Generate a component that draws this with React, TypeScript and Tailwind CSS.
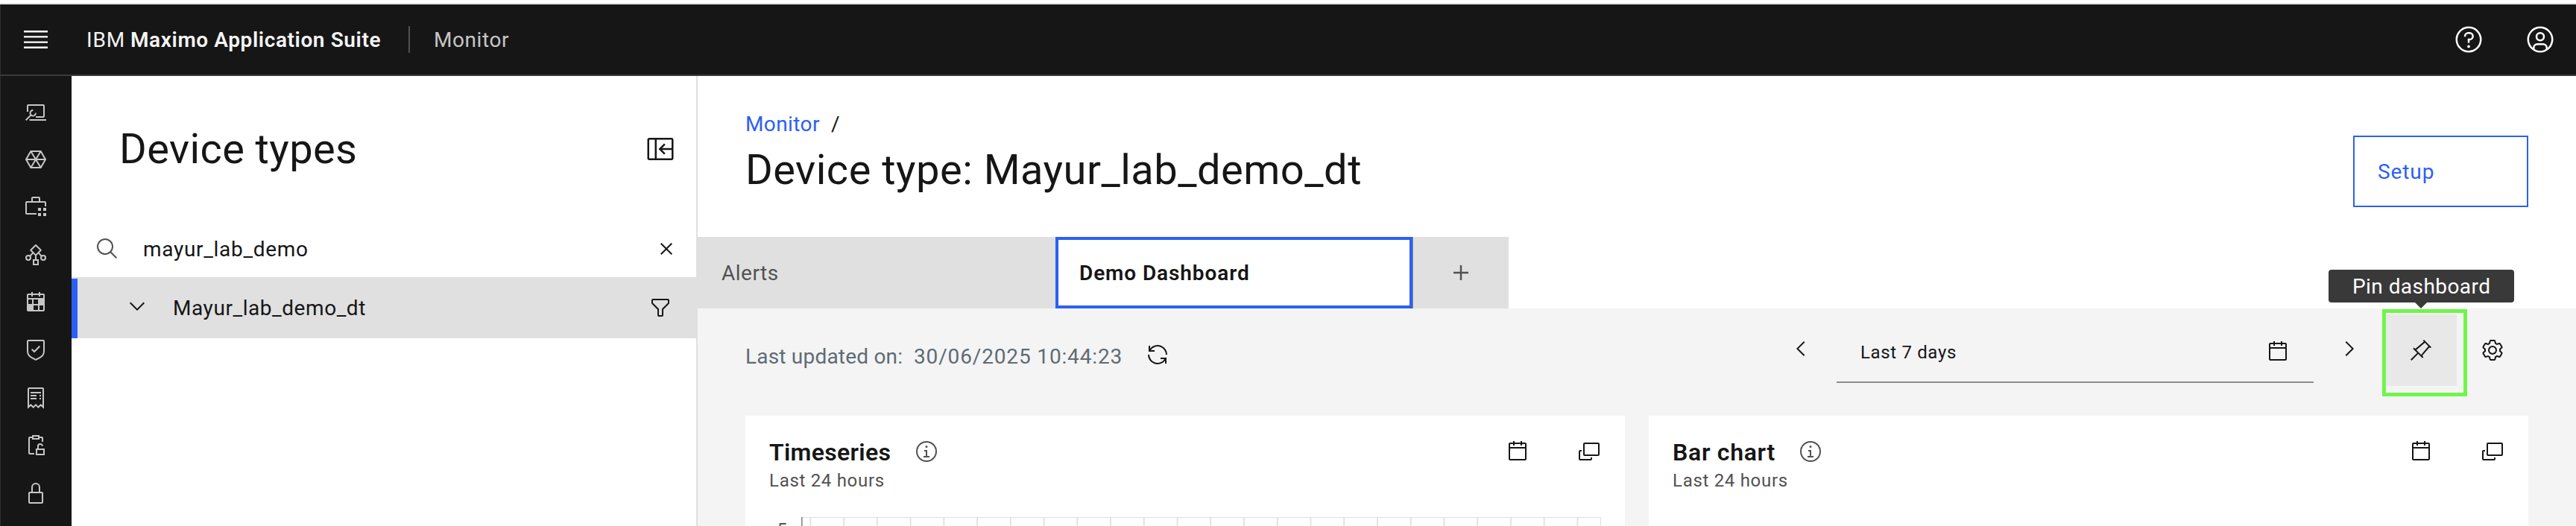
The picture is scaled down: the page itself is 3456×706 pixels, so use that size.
import React from "react";

type IconProps = { size?: number; className?: string; children: React.ReactNode };

function Glyph({ size = 32, className = "", children }: IconProps) {
  return (
    <svg width={size} height={size} viewBox="0 0 32 32" fill="currentColor" className={`block shrink-0 ${className}`} aria-hidden="true">
      {children}
    </svg>
  );
}

const calendarPath =
  "M26,4h-4V2h-2v2h-8V2h-2v2H6C4.9,4,4,4.9,4,6v20c0,1.1,0.9,2,2,2h20c1.1,0,2-0.9,2-2V6C28,4.9,27.1,4,26,4z M26,26H6V12h20V26z M26,10H6V6h4v2h2V6h8v2h2V6h4V10z";

const Calendar = () => <Glyph><path d={calendarPath} /></Glyph>;

const Popup = () => (
  <Glyph>
    <path d="M28,4H10A2.0059,2.0059,0,0,0,8,6V20a2.0059,2.0059,0,0,0,2,2H28a2.0059,2.0059,0,0,0,2-2V6A2.0059,2.0059,0,0,0,28,4Zm0,16H10V6H28Z" />
    <path d="M18,26H4V16H6V14H4a2.0059,2.0059,0,0,0-2,2V26a2.0059,2.0059,0,0,0,2,2H18a2.0059,2.0059,0,0,0,2-2V24H18Z" />
  </Glyph>
);

const Information = ({ className }: { className?: string }) => (
  <Glyph className={className}>
    <path d="M17 22 17 14 13 14 13 16 15 16 15 22 12 22 12 24 20 24 20 22Z" />
    <path d="M16,8a1.5,1.5,0,1,0,1.5,1.5A1.5,1.5,0,0,0,16,8Z" />
    <path d="M16,30A14,14,0,1,1,30,16,14,14,0,0,1,16,30ZM16,4A12,12,0,1,0,28,16,12,12,0,0,0,16,4Z" />
  </Glyph>
);

const railIcons: React.ReactNode[] = [
  <g key="manage" fill="none" stroke="currentColor" strokeWidth="2">
    <path d="M5 16V8a1 1 0 0 1 1-1H26a1 1 0 0 1 1 1V22a1 1 0 0 1-1 1H16" />
    <path d="M7.5 27H30M2.7 27.3 9.6 20.4" />
    <path d="M12.4 14.1A3.7 3.7 0 1 0 15.9 17.6" />
  </g>,
  <path key="hex" fill="none" stroke="currentColor" strokeWidth="2" strokeLinejoin="round" d="M9.3 5H22.7L29 16 22.7 27H9.3L3 16ZM9.3 5 22.7 27M22.7 5 9.3 27M3 16H29" />,
  <g key="case">
    <path d="M30 15V10a2 2 0 0 0-2-2H22V4a2 2 0 0 0-2-2H12a2 2 0 0 0-2 2V8H4a2 2 0 0 0-2 2V24a2 2 0 0 0 2 2H17V24H4V10H28v5ZM12 4h8V8H12Z" />
    <path d="M19 17h4v4h-4zM26 17h4v4h-4zM19 24h4v4h-4zM26 24h4v4h-4z" />
  </g>,
  <g key="flow" fill="none" stroke="currentColor" strokeWidth="2">
    <path strokeLinejoin="round" d="M16 3 22.8 9.8 16 16.6 9.2 9.8Z" />
    <circle cx="6" cy="20" r="3" />
    <circle cx="26" cy="20" r="3" />
    <path d="M13 23h6v6h-6zM16 16.6V23M8.2 17.9 12.2 13.4M23.8 17.9 19.8 13.4" />
  </g>,
  <path key="heat" fillRule="evenodd" d="M26,4h-4V2h-2v2h-8V2h-2v2H6C4.9,4,4,4.9,4,6v20c0,1.1,0.9,2,2,2h20c1.1,0,2-0.9,2-2V6C28,4.9,27.1,4,26,4zM6 6h4v2h2V6h8v2h2V6h4v4H6ZM6 12h5v6H6ZM13 12h6v6h-6ZM13 20h6v6h-6ZM21 20h5v6h-5Z" />,
  <g key="shield">
    <path d="M14 16.59L11.41 14 10 15.41 14 19.41 22 11.41 20.59 10 14 16.59z" />
    <path d="M16,30,9.8242,26.7071A10.9818,10.9818,0,0,1,4,17V4A2.0021,2.0021,0,0,1,6,2H26a2.0021,2.0021,0,0,1,2,2V17a10.9818,10.9818,0,0,1-5.8242,9.7069ZM6,4V17a8.9852,8.9852,0,0,0,4.7656,7.9423L16,27.7333l5.2344-2.791A8.9852,8.9852,0,0,0,26,17V4Z" />
  </g>,
  <g key="receipt">
    <path d="M9 8h14v2H9zM9 12h8v2H9zM21 12h2v2h-2zM9 16h8v2H9zM21 16h2v2h-2z" />
    <path fill="none" stroke="currentColor" strokeWidth="2" d="M6 28.5V4a1 1 0 0 1 1-1H25a1 1 0 0 1 1 1V28.5L22.7 25.4 19.3 28.6 16 25.4 12.7 28.6 9.3 25.4Z" />
  </g>,
  <g key="clip" fill="none" stroke="currentColor" strokeWidth="2">
    <path d="M14 27H8a1 1 0 0 1-1-1V6a1 1 0 0 1 1-1H11M21 5H24a1 1 0 0 1 1 1V11" />
    <path d="M12 3h8v4h-8zM17 21h10v7H17zM19 21V17a3 3 0 0 1 6-.2" />
  </g>,
  <path key="lock" d="M24,14H22V8A6,6,0,0,0,10,8v6H8a2,2,0,0,0-2,2V28a2,2,0,0,0,2,2H24a2,2,0,0,0,2-2V16A2,2,0,0,0,24,14ZM12,8a4,4,0,0,1,8,0v6H12ZM24,28H8V16H24Z" />,
];

function T({ className = "", children }: { className?: string; children: React.ReactNode }) {
  return <span className={`whitespace-pre ${className}`}>{children}</span>;
}

function Header() {
  return (
    <header className="flex h-[96px] shrink-0 items-center border-b-2 border-[#393939] bg-[#161616] px-[28px] text-white shadow-[inset_1px_0_0_#2e2e2e]">
      <svg width="40" height="40" viewBox="0 0 20 20" fill="currentColor" className="block shrink-0">
        <path d="M2 14.8h16V16H2zM2 11.2h16v1.2H2zM2 7.6h16v1.2H2zM2 4h16v1.2H2z" />
      </svg>
      <div className="ml-[48px] flex w-[432px] items-center pt-px text-[28px] leading-[40px] text-[#f4f4f4]">
        <T className="w-[59px] tracking-[0.8px]">IBM</T>
        <T className="font-semibold tracking-[0.6px]">Maximo Application Suite</T>
      </div>
      <div className="h-[36px] w-[2px] bg-[#525252]" />
      <T className="ml-[32px] pt-px text-[28px] leading-[40px] tracking-[0.58px] text-[#c6c6c6]">Monitor</T>
      <div className="ml-auto flex gap-[56px]">
        <Glyph size={40}>
          <path d="M16,2A14,14,0,1,0,30,16,14,14,0,0,0,16,2Zm0,26A12,12,0,1,1,28,16,12,12,0,0,1,16,28Z" />
          <circle cx="16" cy="23.5" r="1.5" />
          <path d="M17,8H15.5A4.49,4.49,0,0,0,11,12.5V13h2v-.5A2.5,2.5,0,0,1,15.5,10H17a2.5,2.5,0,0,1,0,5H15v4.5h2V17a4.5,4.5,0,0,0,0-9Z" />
        </Glyph>
        <Glyph size={40}>
          <path d="M16,8a5,5,0,1,0,5,5A5,5,0,0,0,16,8Zm0,8a3,3,0,1,1,3-3A3.0034,3.0034,0,0,1,16,16Z" />
          <path d="M16,2A14,14,0,1,0,30,16,14.0158,14.0158,0,0,0,16,2ZM10,26.3765V25a3.0033,3.0033,0,0,1,3-3h6a3.0033,3.0033,0,0,1,3,3v1.3765a11.8989,11.8989,0,0,1-12,0Zm13.9925-1.4507A5.0016,5.0016,0,0,0,19,20H13a5.0016,5.0016,0,0,0-4.9925,4.9258,12,12,0,1,1,15.985,0Z" />
        </Glyph>
      </div>
    </header>
  );
}

function DeviceTypesPanel() {
  return (
    <section className="flex w-[840px] shrink-0 flex-col border-r-2 border-[#e0e0e0] bg-white">
      <div className="flex h-[196px] items-center justify-between pl-[64px] pr-[28px]">
        <h2 className="flex text-[56px] leading-[72px] tracking-[0.4px]"><T>Device types</T></h2>
        <Glyph size={40} className="mb-px">
          <path d="M28,4H4C2.9,4,2,4.9,2,6v20c0,1.1,0.9,2,2,2h24c1.1,0,2-0.9,2-2V6C30,4.9,29.1,4,28,4z M10,26H4V6h6V26z M28,15H17.8l3.6-3.6L20,10l-6,6l6,6l1.4-1.4L17.8,17H28v9H12V6h16V15z" />
        </Glyph>
      </div>
      <div className="flex h-[74px] items-center pb-[2px] pl-[32px] pr-[24px]">
        <Glyph className="text-[#525252]">
          <path d="M29,27.5859l-7.5521-7.5521a11.0177,11.0177,0,1,0-1.4141,1.4141L27.5859,29ZM4,13a9,9,0,1,1,9,9A9.01,9.01,0,0,1,4,13Z" />
        </Glyph>
        <T className="ml-[32px] pt-[2px] text-[28px] leading-[40px] tracking-[0.7px]">mayur_lab_demo</T>
        <Glyph className="ml-auto">
          <path d="M24 9.4 22.6 8 16 14.6 9.4 8 8 9.4 14.6 16 8 22.6 9.4 24 16 17.4 22.6 24 24 22.6 17.4 16Z" />
        </Glyph>
      </div>
      <div className="-mr-[2px] flex h-[82px] items-center border-t-2 border-[#e0e0e0] bg-[#e0e0e0]">
        <div className="h-full w-[8px] bg-[#2b60f6]" />
        <Glyph className="mb-[6px] ml-[64px]">
          <path d="M16 22 6 12 7.4 10.6 16 19.2 24.6 10.6 26 12Z" />
        </Glyph>
        <T className="ml-[32px] text-[28px] leading-[38px] tracking-[0.56px]">Mayur_lab_demo_dt</T>
        <Glyph className="mb-[2px] ml-auto mr-[34px]">
          <path d="M18,28H14a2,2,0,0,1-2-2V18.41L4.59,11A2,2,0,0,1,4,9.59V6A2,2,0,0,1,6,4H26a2,2,0,0,1,2,2V9.59A2,2,0,0,1,27.41,11L20,18.41V26A2,2,0,0,1,18,28ZM6,6V9.59l8,8V26h4V17.59l8-8V6Z" />
        </Glyph>
      </div>
    </section>
  );
}

function Toolbar() {
  return (
    <div className="flex h-[144px] shrink-0 items-start">
      <div className="mt-[44px] flex h-[40px] items-center text-[28px] leading-[40px] text-[#5f6b73]">
        <T className="w-[226px] pt-[2px] tracking-[0.2px]">Last updated on:</T>
        <T className="w-[311px] pt-[2px] tracking-[0.85px]">30/06/2025 10:44:23</T>
        <Glyph className="mb-[4px] text-[#161616]">
          <path d="M12,10H6.78A11,11,0,0,1,27,16h2A13,13,0,0,0,6,7.68V4H4v8h8Z" />
          <path d="M20,22h5.22A11,11,0,0,1,5,16H3a13,13,0,0,0,23,8.32V28h2V20H20Z" />
        </Glyph>
      </div>
      <div className="ml-auto mt-[4px] flex items-start">
        <button className="flex h-[96px] w-[96px] items-center justify-center pt-[4px]">
          <Glyph><path d="M10 16 20 6 21.4 7.4 12.8 16 21.4 24.6 20 26Z" /></Glyph>
        </button>
        <div className="flex h-[96px] w-[640px] items-center justify-between border-b-2 border-[#8d8d8d] pl-[32px] pr-[32px] pt-[14px]">
          <T className="pt-[2px] text-[24px] leading-[34px] tracking-[0.65px]">Last 7 days</T>
          <Calendar />
        </div>
        <button className="flex h-[96px] w-[96px] items-center justify-center pt-[4px]">
          <Glyph><path d="M22 16 12 26 10.6 24.6 19.2 16 10.6 7.4 12 6Z" /></Glyph>
        </button>
        <button className="relative mt-[4px] flex h-[96px] w-[96px] items-center justify-center bg-[#e8e8e8]">
          <Glyph>
            <path d="M28.5858,13.3137,30,11.9,20,2,18.6858,3.415l1.1857,1.1857L8.38,14.3225,6.6641,12.6067,5.25,14l5.6572,5.6773L2,28.5831,3.41,30l8.9111-8.9087L18,26.7482l1.3929-1.414L17.6765,23.618l9.724-11.4895ZM16.2559,22.1973,9.7966,15.738l11.4912-9.7219,4.6895,4.6893Z" />
          </Glyph>
          <span className="absolute left-[-4px] top-[-7px] h-[117px] w-[114px] border-[5px] border-[#70f54a]" />
          <span className="absolute left-[-76px] top-[-60px] flex h-[44px] w-[249px] items-center rounded-[4px] bg-[#393939] pl-[32px] pt-px text-[28px] leading-[40px] tracking-[0.44px] text-white">
            <T>Pin dashboard</T>
          </span>
          <svg className="absolute left-[40px] top-[-16px]" width="16" height="8" viewBox="0 0 16 8"><path d="M0 0H16L8 8Z" fill="#393939" /></svg>
        </button>
        <button className="mt-[4px] flex h-[96px] w-[96px] items-center justify-center">
          <Glyph>
            <path d="M27,16.76c0-.25,0-.5,0-.76s0-.51,0-.77l1.92-1.68A2,2,0,0,0,29.3,11L26.94,7a2,2,0,0,0-1.73-1,2,2,0,0,0-.64.1l-2.43.82a11.35,11.35,0,0,0-1.31-.75l-.51-2.52a2,2,0,0,0-2-1.61H13.64a2,2,0,0,0-2,1.61l-.51,2.52a11.48,11.48,0,0,0-1.32.75L7.43,6.06A2,2,0,0,0,6.79,6,2,2,0,0,0,5.06,7L2.7,11a2,2,0,0,0,.41,2.51L5,15.24c0,.25,0,.5,0,.76s0,.51,0,.77L3.11,18.45A2,2,0,0,0,2.7,21L5.06,25a2,2,0,0,0,1.73,1,2,2,0,0,0,.64-.1l2.43-.82a11.35,11.35,0,0,0,1.31.75l.51,2.52a2,2,0,0,0,2,1.61h4.72a2,2,0,0,0,2-1.61l.51-2.52a11.48,11.48,0,0,0,1.32-.75l2.42.82a2,2,0,0,0,.64.1,2,2,0,0,0,1.73-1L29.3,21a2,2,0,0,0-.41-2.51ZM25.21,24l-3.43-1.16a8.86,8.86,0,0,1-2.71,1.57L18.36,28H13.64l-.71-3.55a9.36,9.36,0,0,1-2.7-1.57L6.79,24,4.43,20l2.72-2.4a8.9,8.9,0,0,1,0-3.13L4.43,12,6.79,8l3.43,1.16a8.86,8.86,0,0,1,2.71-1.57L13.64,4h4.72l.71,3.55a9.36,9.36,0,0,1,2.7,1.57L25.21,8,27.57,12l-2.72,2.4a8.9,8.9,0,0,1,0,3.13L27.57,20Z" />
            <path d="M16,22a6,6,0,1,1,6-6A5.94,5.94,0,0,1,16,22Zm0-10a3.91,3.91,0,0,0-4,4,3.91,3.91,0,0,0,4,4,3.91,3.91,0,0,0,4-4A3.91,3.91,0,0,0,16,12Z" />
          </Glyph>
        </button>
      </div>
    </div>
  );
}

function Card({ title, titleClass, children }: { title: string; titleClass: string; children?: React.ReactNode }) {
  return (
    <article className="flex w-[1180px] shrink-0 flex-col bg-white">
      <div className="flex h-[96px] items-center pl-[32px]">
        <h3 className="flex pt-[2px] text-[32px] leading-[48px] font-semibold"><T className={titleClass}>{title}</T></h3>
        <Information className="text-[#525252]" />
        <div className="ml-auto flex">
          <button className="flex h-[96px] w-[96px] items-center justify-center"><Calendar /></button>
          <button className="flex h-[96px] w-[96px] items-center justify-center"><Popup /></button>
        </div>
      </div>
      <p className="mt-[-25px] flex pl-[32px] text-[24px] leading-[32px] tracking-[0.7px] text-[#525252]"><T>Last 24 hours</T></p>
      {children}
    </article>
  );
}

const gridLines = Array.from({ length: 24 }, (_, i) => 87.4 + i * 44.74);

export default function App() {
  return (
    <div className="flex h-[706px] w-full flex-col overflow-hidden bg-white font-['Roboto',sans-serif] text-[#161616]">
      <div className="h-[6px] shrink-0 border-b-2 border-[#e0e4e2] bg-white" />
      <Header />
      <div className="flex min-h-0 flex-1">
        <nav className="flex w-[96px] shrink-0 flex-col items-center gap-[32px] bg-[#161616] pt-[32px] text-[#c6c6c6] shadow-[inset_1px_0_0_#2e2e2e]">
          {railIcons.map((icon, i) => <Glyph key={i}>{icon}</Glyph>)}
        </nav>
        <DeviceTypesPanel />
        <main className="flex min-w-0 flex-1 flex-col">
          <div className="flex h-[216px] shrink-0 items-start justify-between px-[64px]">
            <div className="pt-[45px]">
              <div className="flex text-[28px] leading-[40px]">
                <T className="w-[115px] tracking-[0.4px] text-[#2b60f6]">Monitor</T>
                <T>/</T>
              </div>
              <h1 className="mt-[5px] flex text-[56px] leading-[72px] tracking-[0.5px]"><T>Device type: Mayur_lab_demo_dt</T></h1>
            </div>
            <button className="mt-[80px] flex h-[96px] w-[235px] items-center border-2 border-[#2b60f6] pl-[31px] pt-px text-[28px] leading-[40px] tracking-[0.9px] text-[#2b60f6]">
              <T>Setup</T>
            </button>
          </div>
          <div className="flex h-[96px] shrink-0 text-[28px] leading-[40px]">
            <div className="flex w-[480px] items-center bg-[#e0e0e0] pl-[32px] pt-[2px] tracking-[0.5px] text-[#525252]"><T>Alerts</T></div>
            <div className="flex w-[479px] items-center border-4 border-[#2b60f6] bg-white pl-[28px] pt-[2px] font-semibold tracking-[0.9px]"><T>Demo Dashboard</T></div>
            <div className="flex w-[129px] items-center justify-center border-l border-[#8d8d8d] bg-[#e0e0e0] text-[#525252]">
              <Glyph size={40}><path d="M17 15 17 8 15 8 15 15 8 15 8 17 15 17 15 24 17 24 17 17 24 17 24 15Z" /></Glyph>
            </div>
          </div>
          <div className="flex flex-1 flex-col bg-[#f4f4f4] px-[64px]">
            <Toolbar />
            <div className="flex flex-1 gap-[32px]">
              <Card title="Timeseries" titleClass="w-[195px] tracking-[0.3px]">
                <svg width="1180" height="16" viewBox="0 0 1180 16" className="mt-[29px] block shrink-0" fill="none">
                  <path d="M76 4.5H1148" stroke="#e0e0e0" />
                  {gridLines.map((x) => <path key={x} d={`M${x} 4V16`} stroke="#e0e0e0" strokeWidth="1.8" />)}
                  <path d="M1147.5 4V16" stroke="#e0e0e0" />
                  <path d="M75.8 4V16" stroke="#8d8d8d" strokeWidth="1.8" />
                  <text x="56" y="28.5" textAnchor="end" fontSize="24" fill="#525252">5</text>
                </svg>
              </Card>
              <Card title="Bar chart" titleClass="w-[169px] tracking-[0.7px]" />
            </div>
          </div>
        </main>
      </div>
    </div>
  );
}
